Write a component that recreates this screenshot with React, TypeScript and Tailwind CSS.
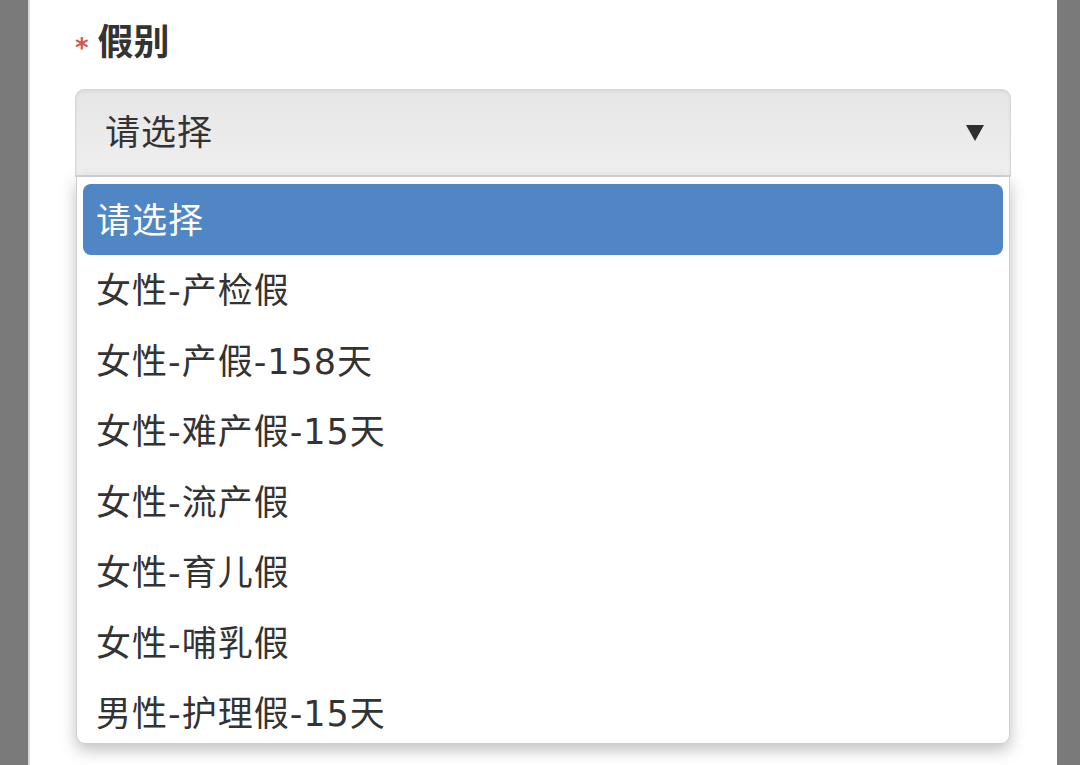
const options = [
  "请选择",
  "女性-产检假",
  "女性-产假-158天",
  "女性-难产假-15天",
  "女性-流产假",
  "女性-育儿假",
  "女性-哺乳假",
  "男性-护理假-15天",
];

export default function App() {
  return (
    <div
      className="flex h-[765px] w-[1080px] overflow-hidden bg-[#7a7a7a]"
      style={{ fontFamily: '"DejaVu Sans", "Noto Sans CJK SC", sans-serif' }}
    >
      <div className="ml-[28px] w-[1029px] border-l-2 border-[#d9d9d9] bg-white pl-[45px] pr-[46px] pt-[18px]">
        <div className="flex items-center gap-[9px]">
          <span className="mt-[10px] text-[26px] font-bold leading-none text-[#d9534f]">*</span>
          <span className="text-[36px] font-bold leading-[50px] text-[#333]">假别</span>
        </div>

        <div className="relative mt-[21px]">
          <div className="flex h-[88px] items-center justify-between rounded-t-[9px] border border-b-2 border-[#d6d6d6] bg-gradient-to-b from-[#e6e6e6] to-[#efefef] pl-[29px] pr-[25px] shadow-[inset_0_2px_3px_rgba(0,0,0,0.06)]">
            <span className="pt-[2px] text-[35px] leading-none tracking-[1px] text-[#333]">请选择</span>
            <svg width="20" height="18" viewBox="0 0 20 18">
              <path d="M1 1 H19 L10 17 Z" fill="#2f2f2f" />
            </svg>
          </div>

          <div className="mx-[1px] h-[567px] overflow-hidden rounded-b-[9px] border border-t-0 border-[#cfcfcf] bg-white px-[6px] pt-[7px] shadow-[0_6px_16px_rgba(0,0,0,0.25)]">
            {options.map((o, i) => (
              <div
                key={o}
                className={
                  i === 0
                    ? "flex h-[70.5px] items-center rounded-[8px] bg-[#5186c4] pl-[13px] pt-[3px] text-[35px] tracking-[1px] text-white"
                    : "flex h-[70.5px] items-center pl-[13px] pt-[3px] text-[35px] tracking-[1px] text-[#333]"
                }
              >
                {o}
              </div>
            ))}
          </div>
        </div>
      </div>
    </div>
  );
}
